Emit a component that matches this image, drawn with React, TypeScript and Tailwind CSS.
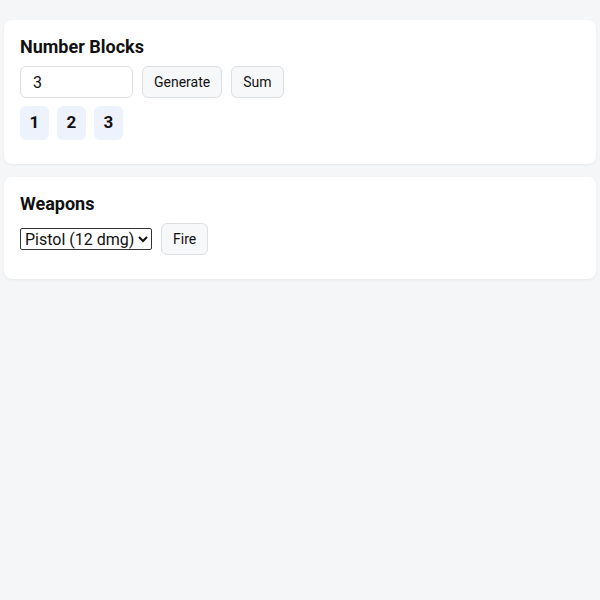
import { useState } from "react";

const weapons = [
  { name: "Pistol", dmg: 12 },
  { name: "Rifle", dmg: 25 },
  { name: "Bow", dmg: 18 },
];

export default function App() {
  const [count, setCount] = useState("3");
  const [blocks, setBlocks] = useState<number[]>([1, 2, 3]);
  const [weapon, setWeapon] = useState(0);

  const generate = () => {
    const n = Math.max(0, parseInt(count) || 0);
    setBlocks(Array.from({ length: n }, (_, i) => i + 1));
  };

  return (
    <div
      className="min-h-screen w-full bg-[#f5f6f8] px-1 py-5 text-[#111]"
      style={{ fontFamily: "Roboto, 'Liberation Sans', sans-serif" }}
    >
      <div className="mb-[13px] rounded-lg bg-white px-4 pt-4 pb-4 shadow-[0_1px_3px_rgba(0,0,0,0.06)]">
        <h2 className="mb-2 text-lg leading-[22px] font-bold">Number Blocks</h2>
        <div className="mb-2 flex items-center gap-[9px]">
          <input
            value={count}
            onChange={(e) => setCount(e.target.value)}
            className="h-8 w-[113px] rounded-md border border-[#dcdfe4] px-3 text-base outline-none"
          />
          <button
            onClick={generate}
            className="h-8 rounded-md border border-[#dcdfe4] bg-[#f7f8fa] px-[11px] text-sm"
          >
            Generate
          </button>
          <button className="h-8 rounded-md border border-[#dcdfe4] bg-[#f7f8fa] px-[11px] text-sm">
            Sum
          </button>
        </div>
        <div className="mb-2 flex gap-[8px]">
          {blocks.map((b) => (
            <div
              key={b}
              className="flex h-[34px] w-[29px] items-center justify-center rounded-md bg-[#eef2fc] text-[17px] font-bold"
            >
              {b}
            </div>
          ))}
        </div>
      </div>

      <div className="rounded-lg bg-white px-4 pt-4 pb-4 shadow-[0_1px_3px_rgba(0,0,0,0.06)]">
        <h2 className="mb-2 text-lg leading-[22px] font-bold">Weapons</h2>
        <div className="mb-2 flex items-center gap-[9px]">
          <select
            value={weapon}
            onChange={(e) => setWeapon(Number(e.target.value))}
            className="h-[22px] rounded-[2px] border border-[#333] bg-white text-base"
          >
            {weapons.map((w, i) => (
              <option key={w.name} value={i}>
                {w.name} ({w.dmg} dmg)
              </option>
            ))}
          </select>
          <button className="h-8 rounded-md border border-[#dcdfe4] bg-[#f7f8fa] px-[11px] text-sm">
            Fire
          </button>
        </div>
      </div>
    </div>
  );
}
